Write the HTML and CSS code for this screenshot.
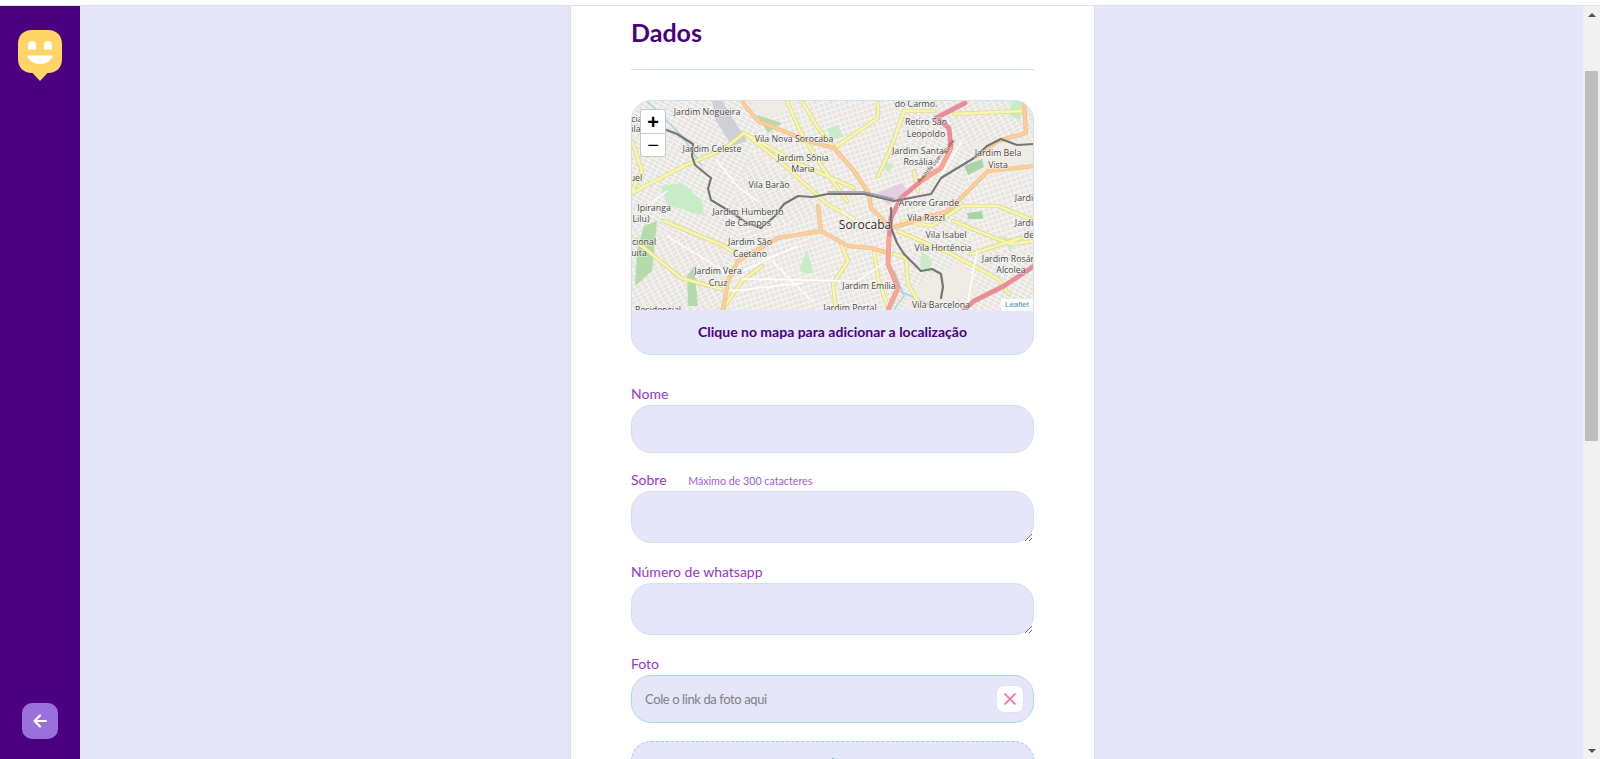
FILE: index.html
```html
<!DOCTYPE html>
<html lang="pt-BR">
<head>
<meta charset="utf-8">
<title>Dados</title>
<link rel="stylesheet" href="styles.css">
</head>
<body>
<div class="topline"></div>
<div class="shell">
  <aside class="sidebar">
    <svg class="logo" width="44" height="51" viewBox="0 0 44 51">
      <path fill="#ffd666" d="M14 0H30C38.500 0 44 5.500 44 14V29C44 37.500 38.500 43 30 43H29.500L22 51L14.500 43H14C5.500 43 0 37.500 0 29V14C0 5.500 5.500 0 14 0Z"/>
      <path fill="#fff" d="M10 19.500V15A4 4 0 0 1 18 15V19.500ZM26 19.500V15A4 4 0 0 1 34 15V19.500ZM9 25.500H35C33.500 31 28 34 22 34C16 34 10.500 31 9 25.500Z"/>
    </svg>
    <button class="back" type="button" aria-label="Voltar">
      <svg width="16" height="16" viewBox="0 0 16 16" fill="none" stroke="#fff" stroke-width="2.200" stroke-linecap="round" stroke-linejoin="round"><path d="M14 8H2.500M8 2.500L2.500 8L8 13.500"/></svg>
    </button>
  </aside>
  <main class="content">
    <form class="card">
      <h2 class="title">Dados</h2>
      <div class="map">
        <svg class="map-art" width="403" height="209" viewBox="0 0 403 209">
          <defs>
            <pattern id="blocksA" width="6" height="4" patternUnits="userSpaceOnUse" patternTransform="rotate(28)">
              <rect width="6" height="4" fill="#e6e3dd"/>
              <path d="M0 .5H6M1 0V4" stroke="#fbfbfa" stroke-width=".9"/>
            </pattern>
            <pattern id="blocksB" width="5" height="5" patternUnits="userSpaceOnUse" patternTransform="rotate(-18)">
              <rect width="5" height="5" fill="#e8e5df"/>
              <path d="M0 .5H5M1 0V5" stroke="#fbfbfa" stroke-width=".9"/>
            </pattern>
            <pattern id="blocksC" width="4" height="6" patternUnits="userSpaceOnUse" patternTransform="rotate(62)">
              <rect width="4" height="6" fill="#e5e2dc"/>
              <path d="M0 .5H4M1 0V6" stroke="#fbfbfa" stroke-width=".9"/>
            </pattern>
          </defs>
          <g class="map-base">
            <rect width="403" height="209" fill="url(#blocksA)"/>
            <path d="M130 0H260L300 100L256 209H90L110 110Z" fill="url(#blocksB)"/>
            <path d="M330 60H403V150H340Z" fill="url(#blocksB)"/>
            <path d="M0 125L90 145L95 209H0Z" fill="url(#blocksC)"/>
            <path d="M120 50L200 110L150 125L100 100Z" fill="url(#blocksC)"/>
            <path d="M300 0H403V40L330 50Z" fill="url(#blocksC)"/>
            <path d="M340 40H403V70L345 75Z" fill="#efece5"/>
            <path d="M275 190L330 160L345 190L300 209H275Z" fill="#efece5"/>
            <path d="M118 0H160L150 12L130 20Z" fill="#efece5"/>
            <g fill="#c8ecc6">
              <path d="M29 85L50 82L70 100L72 115L50 108L35 104Z"/>
              <path d="M12 125L25 120L20 170L3 185L5 150Z" fill="#b4dcab"/>
              <path d="M195 28L205 24L212 36L198 38Z"/>
              <path d="M168 168L175 148L182 172L172 172Z"/>
              <path d="M332 65L350 58L352 66L336 74Z" fill="#a9d4a8"/>
              <path d="M335 112L350 110L351 118L336 118Z" fill="#a9d4a8"/>
              <path d="M380 0L392 0L388 20L378 14Z"/>
              <path d="M55 175L62 165L66 205L56 205Z" fill="#b4dcab"/>
              <path d="M290 150L300 160L298 172L288 165Z"/>
              <path d="M250 60L262 64L256 72Z"/>
              <path d="M10 36L22 30L26 42L14 48Z"/>
              <path d="M125 14L150 22L136 32Z" fill="#b9d9ad"/>
              <path d="M370 135L385 140L378 150Z"/>
            </g>
            <path d="M245 92L270 82L276 92L256 104Z" fill="#e4cfe0"/>
            <path d="M90 0L115 40L100 45L84 20L80 0Z" fill="#cfd0d6"/>
            <path d="M15 0L30 15L50 35L70 65" fill="none" stroke="#aad3df" stroke-width="1.500"/>
            <path d="M262 170L272 195L262 209M268 190L300 205" fill="none" stroke="#aad3df" stroke-width="1.500"/>
            <g fill="none" stroke-linecap="round" stroke-linejoin="round">
              <g stroke="#dad58f" stroke-width="4.200">
                <path d="M0 92L52 65L92 48L112 32L150 62L195 103L222 118M112 32L165 62L222 87M155 0L168 30L186 60L215 100M171 2L186 27L202 47M246 2L246 17L202 47M302 10L272 10L259 47L246 75M322 13L392 10M282 70L286 90M0 40L10 70L0 90"/>
                <path d="M0 137L49 177L89 188M32 120L92 145L102 152M209 143L216 160L201 183L204 209M242 148L246 177L256 207M262 153L274 157L276 183L291 209M266 130L319 153L366 178L377 193M339 153L389 137M321 120L378 143L403 140M90 209L110 180L130 165M270 120L300 125L330 105L366 105L403 120"/>
              </g>
              <g stroke="#f6f7ad" stroke-width="2.800">
                <path d="M0 92L52 65L92 48L112 32L150 62L195 103L222 118M112 32L165 62L222 87M155 0L168 30L186 60L215 100M171 2L186 27L202 47M246 2L246 17L202 47M302 10L272 10L259 47L246 75M322 13L392 10M282 70L286 90M0 40L10 70L0 90"/>
                <path d="M0 137L49 177L89 188M32 120L92 145L102 152M209 143L216 160L201 183L204 209M242 148L246 177L256 207M262 153L274 157L276 183L291 209M266 130L319 153L366 178L377 193M339 153L389 137M321 120L378 143L403 140M90 209L110 180L130 165M270 120L300 125L330 105L366 105L403 120"/>
              </g>
            </g>
            <g fill="none" stroke="#fff" stroke-width="1.400" stroke-linecap="round">
              <path d="M85 60L105 85L125 100M8 110L35 90M35 135L100 175M110 170L165 145M140 160L180 200M110 178L225 180L255 160M210 110L230 125M330 40L300 90M345 150L335 205M100 190L170 182"/>
            </g>
            <g fill="none" stroke-linecap="round" stroke-linejoin="round">
              <path d="M111 2L126 20L176 40L202 47L222 70L237 93L239 107L259 127M186 105L189 130L146 137L106 160L96 180L91 209M189 130L216 145L239 147L256 152M259 127L316 110L356 70L402 65M392 2L394 32L366 40L345 55" stroke="#f3bb86" stroke-width="4.200"/>
              <path d="M111 2L126 20L176 40L202 47L222 70L237 93L239 107L259 127M186 105L189 130L146 137L106 160L96 180L91 209M189 130L216 145L239 147L256 152M259 127L316 110L356 70L402 65M392 2L394 32L366 40L345 55" stroke="#fbcf9a" stroke-width="2.800"/>
              <path d="M333 2L304 17L317 27L319 47L309 67L289 80L269 97L259 117L257 137L256 163L266 187L256 209M402 165L372 185L342 200L332 209" stroke="#e98d98" stroke-width="4.800"/>
              <path d="M319 47L309 67L289 80M257 137L256 163L266 187L256 209" stroke="#f6a78f" stroke-width="4"/>
              <path d="M32 28L45 33L61 43L60 55L63 64L79 77L76 88L79 99L102 113L115 122L129 127L143 115L152 103L166 95L180 96L196 93L232 93L262 100L299 93L309 77L342 57L355 45L369 38L385 44L402 43M259 107L259 127L265 142L272 153L289 170L300 168L309 173L311 186L309 197" stroke="#767676" stroke-width="2.200"/>
              <path d="M196 91L232 91L262 98" stroke="#9a9a9a" stroke-width="1.500"/>
            </g>
          </g>
          <text class="road-label" transform="translate(288 82) rotate(-50)">Avenida Dom Aguirre</text>
          <g class="map-label">
            <text x="75" y="14">Jardim Nogueira</text>
            <text x="162" y="41">Vila Nova Sorocaba</text>
            <text x="284" y="6">do Carmo.</text>
            <text x="294" y="24">Retiro São</text>
            <text x="294" y="36">Leopoldo</text>
            <text x="80" y="51">Jardim Celeste</text>
            <text x="171" y="60">Jardim Sônia</text>
            <text x="171" y="71">Maria</text>
            <text x="286" y="53">Jardim Santa</text>
            <text x="286" y="64">Rosália</text>
            <text x="366" y="55">Jardim Bela</text>
            <text x="366" y="67">Vista</text>
            <text x="137" y="87">Vila Barão</text>
            <text x="5" y="21">cia</text>
            <text x="4" y="31">ila</text>
            <text x="4" y="80">uel</text>
            <text x="22" y="110">Ipiranga</text>
            <text x="9" y="121">Lilu)</text>
            <text x="116" y="114">Jardim Humberto</text>
            <text x="116" y="125">de Campos</text>
            <text x="297" y="105">Árvore Grande</text>
            <text x="294" y="120">Vila Raszl</text>
            <text x="392" y="100">Jardi</text>
            <text x="392" y="125">Jardi</text>
            <text x="12" y="144">cional</text>
            <text x="7" y="155">uita</text>
            <text x="118" y="144">Jardim São</text>
            <text x="118" y="156">Caetano</text>
            <text x="314" y="137">Vila Isabel</text>
            <text x="397" y="137">de</text>
            <text x="311" y="150">Vila Hortência</text>
            <text x="376" y="161">Jardim Rosár</text>
            <text x="379" y="172">Alcolea</text>
            <text x="86" y="173">Jardim Vera</text>
            <text x="86" y="185">Cruz</text>
            <text x="237" y="188">Jardim Emília</text>
            <text x="309" y="207">Vila Barcelona</text>
            <text x="218" y="210">Jardim Portal</text>
            <text x="26" y="212">Residencial</text>
            <text class="map-city" x="233" y="128">Sorocaba</text>
          </g>
        </svg>
        <div class="zoom-bar">
          <span class="zoom-btn">+</span>
          <span class="zoom-btn zoom-minus">−</span>
        </div>
        <span class="attribution">Leaflet</span>
        <p class="map-footer">Clique no mapa para adicionar a localização</p>
      </div>

      <div class="field field-nome">
        <label class="label" for="nome">Nome</label>
        <input class="input" id="nome" type="text">
      </div>
      <div class="field">
        <label class="label" for="sobre">Sobre <span class="hint">Máximo de 300 catacteres</span></label>
        <textarea class="input area" id="sobre"></textarea>
      </div>
      <div class="field">
        <label class="label" for="whats">Número de whatsapp</label>
        <textarea class="input area" id="whats"></textarea>
      </div>
      <div class="field">
        <label class="label" for="foto">Foto</label>
        <div class="photo-row">
          <input class="input photo" id="foto" type="text" placeholder="Cole o link da foto aqui">
          <button class="remove" type="button" aria-label="Remover">
            <svg width="14" height="14" viewBox="0 0 14 14" fill="none" stroke="#ff669d" stroke-width="1.700" stroke-linecap="round"><path d="M2 2L12 12M12 2L2 12"/></svg>
          </button>
        </div>
      </div>
      <div class="add-box">
        <svg width="24" height="24" viewBox="0 0 24 24" fill="none" stroke="#15b6d6" stroke-width="2" stroke-linecap="round"><path d="M12 1V23M1 12H23"/></svg>
      </div>
    </form>
  </main>
  <div class="scrollbar">
    <span class="arrow arrow-up"></span>
    <span class="thumb"></span>
    <span class="arrow arrow-down"></span>
  </div>
</div>
</body>
</html>
```
FILE: styles.css
```css
* { box-sizing: border-box; }
html, body { margin: 0; height: 100%; overflow: hidden; }
body { display: flex; flex-direction: column; background: #fff; font-family: "Lato", "Noto Sans", sans-serif; }
.topline { flex: none; height: 6px; background: #fff; border-bottom: 1px solid #dfe1e3; }
.shell { flex: 1; display: flex; min-height: 0; }

.sidebar { flex: none; width: 80px; background: #4b0082; display: flex; flex-direction: column; align-items: center; justify-content: space-between; padding: 24px 0 20px; }
.logo { display: block; }
.back { width: 36px; height: 36px; border: 0; border-radius: 10px; background: #9a70dc; display: flex; align-items: center; justify-content: center; padding: 0; }

.content { flex: 1; min-width: 0; background: #e5e6f9; display: flex; justify-content: center; overflow: hidden; padding-left: 2px; }
.card { flex: none; width: 525px; height: 800px; background: #fff; border: 1px solid #d3e2e5; border-width: 0 1px; padding: 0 60px; }
.title { margin: 0; height: 64px; padding-top: 11px; font-size: 25px; line-height: 30px; font-weight: 700; color: #4b0082; border-bottom: 1px solid #d3e2e5; }

.map { position: relative; margin-top: 30px; height: 255px; border: 1px solid #d3e2e5; border-radius: 20px; overflow: hidden; background: #e5e6f9; }
.map-art { display: block; }
.map-base { filter: blur(.35px); }
.map-label text { font-family: "Open Sans", "Noto Sans", sans-serif; font-size: 8.800px; fill: #444; text-anchor: middle; paint-order: stroke; stroke: #fff; stroke-width: 1.300px; stroke-opacity: .6; }
.map-label .map-city { font-size: 12px; fill: #2a2a2a; }
.road-label { font-family: "Open Sans", sans-serif; font-size: 5.500px; fill: #5c2a30; }
.zoom-bar { position: absolute; left: 9px; top: 9px; width: 24px; display: flex; flex-direction: column; background: #fff; border-radius: 2px; box-shadow: 0 0 0 1px #c8c8c8; }
.zoom-btn { height: 23px; display: flex; align-items: center; justify-content: center; font: 700 20px/1 "Liberation Sans", sans-serif; color: #000; }
.zoom-btn + .zoom-btn { border-top: 1px solid #ccc; }
.zoom-minus { font-weight: 400; }
.attribution { position: absolute; right: 0; top: 198px; padding: 1px 4px; background: rgba(255, 255, 255, .8); font: 8px/10px "Liberation Sans", sans-serif; color: #4a93b8; }
.map-footer { margin: 0; height: 42px; display: flex; align-items: center; justify-content: center; font-size: 14px; font-weight: 700; color: #4b0082; }

.field { margin-top: 19px; display: flex; flex-direction: column; }
.field-nome { margin-top: 31px; }
.label { height: 19px; font-size: 14px; line-height: 16px; color: #9636d2; }
.hint { margin-left: 18px; font-size: 10.700px; color: #a35be0; }
.input { display: block; width: 100%; height: 48px; margin: 0; padding: 0 13px; background: #e5e6f9; border: 1px solid #d3e2e5; border-radius: 20px; outline: 0; font: 14px "Lato", sans-serif; color: #5c8599; }
.area { height: 52px; margin-bottom: 2px; resize: vertical; }
.photo-row { position: relative; }
.photo { border-color: #a1e9c5; font-size: 13px; letter-spacing: -.4px; }
.photo::placeholder { color: #7f7f86; opacity: 1; }
.remove { position: absolute; right: 10px; top: 10px; width: 28px; height: 28px; padding: 0; border: 1px solid #dfe3ee; border-radius: 8px; background: #fff; display: flex; align-items: center; justify-content: center; }
.add-box { margin-top: 18px; height: 58px; display: flex; align-items: center; justify-content: center; background: #e5e6f9; border: 1px dashed #96d2f0; border-radius: 20px; }

.scrollbar { flex: none; width: 17px; background: #f1f1f1; display: flex; flex-direction: column; align-items: center; position: relative; padding-top: 7px; }
.arrow { flex: none; width: 0; height: 0; border-left: 4px solid transparent; border-right: 4px solid transparent; }
.arrow-up { border-bottom: 4px solid #505050; }
.arrow-down { border-top: 4px solid #505050; margin-top: auto; margin-bottom: 6px; }
.thumb { flex: none; width: 13px; height: 370px; margin-top: 54px; background: #bebebe; }
```
